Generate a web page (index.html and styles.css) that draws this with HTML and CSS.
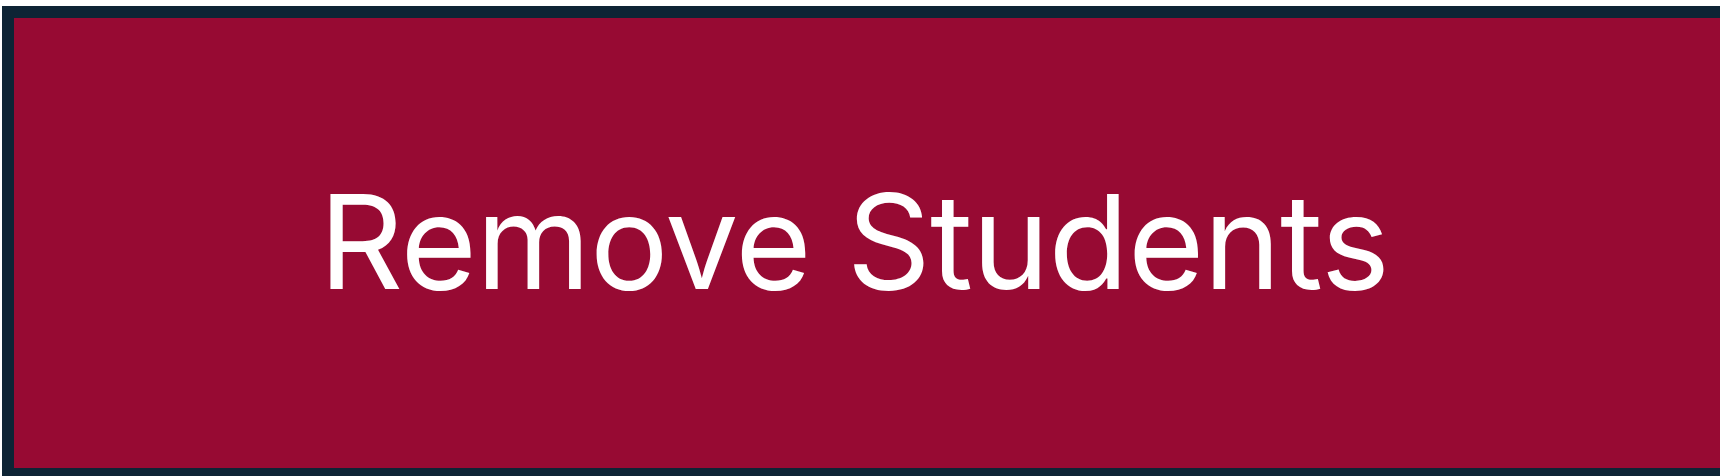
FILE: index.html
```html
<!DOCTYPE html>
<html>
<head>
<meta charset="utf-8">
<link rel="stylesheet" href="styles.css">
</head>
<body>
<button class="remove-btn">Remove Students</button>
</body>
</html>
```

FILE: styles.css
```css
html, body {
  margin: 0;
  padding: 0;
  overflow: hidden;
  background: #ffffff;
}
body {
  width: 1720px;
  height: 476px;
  padding: 6px 0 0 2px;
  box-sizing: border-box;
}
.remove-btn {
  display: flex;
  align-items: center;
  justify-content: center;
  box-sizing: border-box;
  width: 1730px;
  height: 474px;
  margin: 0;
  padding: 0 26px 4px 0;
  border: 12px solid #0e2435;
  background: #970a33;
  color: #ffffff;
  font-family: Inter, "Liberation Sans", Arial, sans-serif;
  font-size: 131px;
  font-weight: 400;
  letter-spacing: -0.85px;
  line-height: 1;
  cursor: pointer;
}
```
